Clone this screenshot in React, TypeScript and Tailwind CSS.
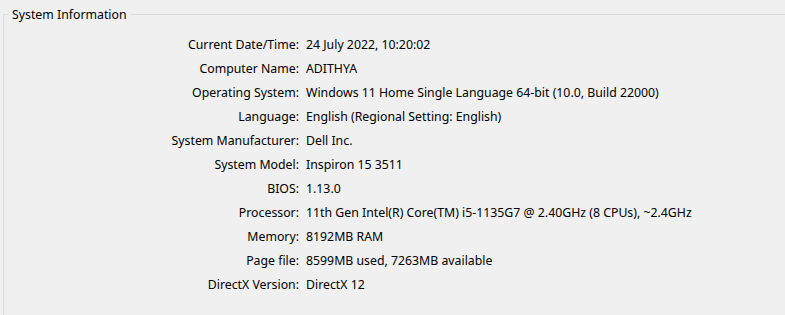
import React from "react";

const rows: [string, string][] = [
  ["Current Date/Time:", "24 July 2022, 10:20:02"],
  ["Computer Name:", "ADITHYA"],
  ["Operating System:", "Windows 11 Home Single Language 64-bit (10.0, Build 22000)"],
  ["Language:", "English (Regional Setting: English)"],
  ["System Manufacturer:", "Dell Inc."],
  ["System Model:", "Inspiron 15 3511"],
  ["BIOS:", "1.13.0"],
  ["Processor:", "11th Gen Intel(R) Core(TM) i5-1135G7 @ 2.40GHz (8 CPUs), ~2.4GHz"],
  ["Memory:", "8192MB RAM"],
  ["Page file:", "8599MB used, 7263MB available"],
  ["DirectX Version:", "DirectX 12"],
];

export default function App() {
  return (
    <div
      className="h-[315px] w-[785px] overflow-hidden bg-[#f0f0f0] pl-[3px] pt-[14px] text-[12.3px] text-black"
      style={{ fontFamily: '"Noto Sans", "Liberation Sans", sans-serif' }}
    >
      <div className="relative h-[400px] border-l border-t border-[#dcdcdc] pt-[18px]">
        <div className="absolute left-[5px] top-[-8px] bg-[#f0f0f0] px-[3px] leading-[16px]">
          System Information
        </div>
        <div className="grid grid-cols-[295px_1fr] gap-x-[7px]">
          {rows.map(([k, v]) => (
            <React.Fragment key={k}>
              <div className="h-[24px] text-right leading-[24px]">{k}</div>
              <div className="h-[24px] whitespace-nowrap leading-[24px]">{v}</div>
            </React.Fragment>
          ))}
        </div>
      </div>
    </div>
  );
}
